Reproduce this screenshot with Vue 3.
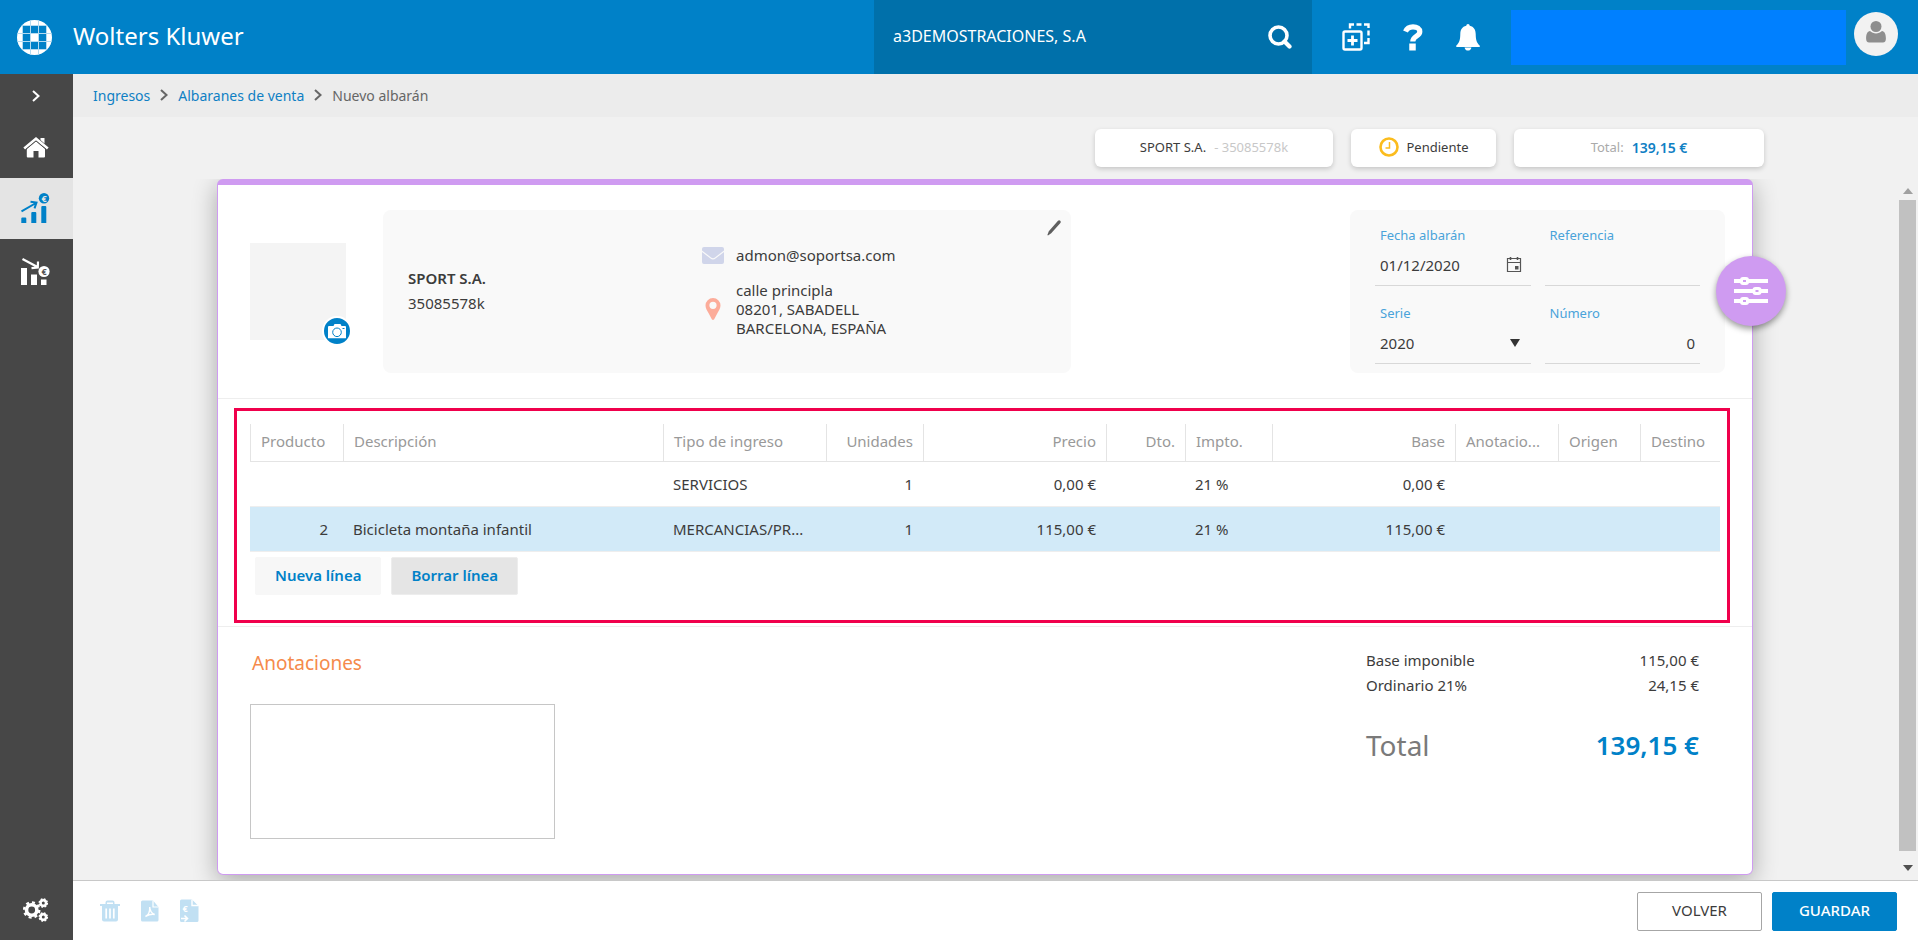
<script setup>
import { ref } from 'vue'

const columns = [
  { key: 'producto', label: 'Producto', width: 93, num: true, labelLeft: true },
  { key: 'descripcion', label: 'Descripción', width: 320 },
  { key: 'tipo', label: 'Tipo de ingreso', width: 163 },
  { key: 'unidades', label: 'Unidades', width: 97, num: true },
  { key: 'precio', label: 'Precio', width: 183, num: true },
  { key: 'dto', label: 'Dto.', width: 79, num: true },
  { key: 'impto', label: 'Impto.', width: 87 },
  { key: 'base', label: 'Base', width: 183, num: true },
  { key: 'anotaciones', label: 'Anotacio...', width: 103 },
  { key: 'origen', label: 'Origen', width: 82 },
  { key: 'destino', label: 'Destino', width: 80 },
]
const tableWidth = columns.reduce((sum, c) => sum + c.width, 0)

const rows = [
  { tipo: 'SERVICIOS', unidades: '1', precio: '0,00 €', impto: '21 %', base: '0,00 €' },
  {
    producto: '2',
    descripcion: 'Bicicleta montaña infantil',
    tipo: 'MERCANCIAS/PR...',
    unidades: '1',
    precio: '115,00 €',
    impto: '21 %',
    base: '115,00 €',
  },
]
const selected = ref(1)
const fecha = ref('01/12/2020')
const referencia = ref('')
const serie = ref('2020')
const numero = ref('0')
const notas = ref('')
</script>

<template>
  <div class="shell">
    <header class="topbar">
      <svg class="logo" viewBox="0 0 35 35" width="35" height="35" aria-hidden="true">
        <defs>
          <clipPath id="globe"><circle cx="17.5" cy="17.5" r="17.5" /></clipPath>
        </defs>
        <g clip-path="url(#globe)">
          <rect width="35" height="35" fill="#fff" />
          <path d="M6 6h7v7H6zM14 6h7v7h-7zM22 6h7v7h-7zM6 14h7v7H6zM22 14h7v7h-7zM6 22h7v7H6zM14 22h7v7h-7zM22 22h7v7h-7z" fill="#0081c8" />
          <path d="M0 5.500h35M0 13.500h35M0 21.500h35M0 29.500h35M5.500 0v35M13.500 0v35M21.500 0v35M29.500 0v35" stroke="#b5dbf0" stroke-width="1" />
        </g>
      </svg>
      <span class="brand">Wolters Kluwer</span>
      <div class="company">
        <span>a3DEMOSTRACIONES, S.A</span>
        <button type="button" class="plain" aria-label="Buscar">
          <svg viewBox="0 0 24 24" width="24" height="24" fill="none" stroke="#fff">
            <circle cx="10.500" cy="10.500" r="8.500" stroke-width="3.600" />
            <path d="M16.500 16.500l5 5" stroke-width="4.200" stroke-linecap="round" />
          </svg>
        </button>
      </div>
      <nav class="tools">
        <button type="button" class="plain" aria-label="Duplicar">
          <svg viewBox="0 0 28 28" width="28" height="28" fill="none" stroke="#fff" stroke-width="2.400">
            <rect x="1.500" y="8.500" width="18" height="18" rx="1.500" />
            <path d="M10.500 12.500v10M5.500 17.500h10" stroke-width="2.800" />
            <path d="M8 5.500V1.500h4M14.500 1.500h5M22 1.500h4.500v3.500M26.500 7.500v5M26.500 15v5h-4.500" />
          </svg>
        </button>
        <button type="button" class="plain" aria-label="Ayuda">
          <svg viewBox="0 0 20 27" width="20" height="27" fill="none" stroke="#fff">
            <path d="M2.500 7.500C4 4 6.500 2.800 10 2.800c4 0 6.800 1.900 6.800 5 0 4.800-7 4-7 9.700" stroke-width="5.200" />
            <path d="M9.500 19.500v7" stroke-width="6.500" />
          </svg>
        </button>
        <button type="button" class="plain" aria-label="Notificaciones">
          <svg viewBox="0 0 24 27" width="24" height="27" fill="#fff">
            <path d="M12 0c1 0 1.600.7 1.700 1.800C18 2.600 19.600 6 19.700 10c.1 6 1 8.500 3.900 11.500.8.900.2 1.500-.7 1.500H1.100c-.9 0-1.500-.6-.7-1.500C3.300 18.500 4.200 16 4.300 10 4.400 6 6 2.600 10.300 1.800 10.400.7 11 0 12 0zM8.600 23.500h6.800c-.2 2-1.600 3.100-3.400 3.100s-3.200-1.100-3.400-3.100z" />
          </svg>
        </button>
      </nav>
      <div class="account"></div>
      <button type="button" class="avatar" aria-label="Usuario">
        <svg viewBox="0 0 20 22" width="20" height="22" fill="#8e8e8e">
          <circle cx="10" cy="5.500" r="5.500" />
          <path d="M4 10c1.700 1.700 3.700 2.400 6 2.400s4.300-.7 6-2.400c2.600.4 3.900 3 3.900 7.500 0 2.800-1 4-3 4H3.100c-2 0-3-1.200-3-4C.1 13 1.400 10.400 4 10z" />
        </svg>
      </button>
    </header>

    <div class="body">
      <nav class="sidebar">
        <button type="button" class="side expand" aria-label="Expandir menú">
          <svg viewBox="0 0 8 12" width="8" height="12" fill="none" stroke="#fff" stroke-width="2"><path d="M1 1l5.500 5L1 11" /></svg>
        </button>
        <button type="button" class="side" aria-label="Inicio">
          <svg viewBox="0 0 26 21" width="26" height="21">
            <path d="M13 4l9 7.800V19.500a1 1 0 0 1-1 1h-5.500V14h-5v6.500H4.800a1 1 0 0 1-1-1v-7.700z" fill="#fff" />
            <path d="M17.500 1h4v5.500l-4-3.500z" fill="#fff" />
            <path d="M1.200 11.500L13 1.700l11.800 9.800" fill="none" stroke="#fff" stroke-width="2.600" />
            <path d="M3 12.300L13 4l10 8.300" fill="none" stroke="#474747" stroke-width=".9" />
          </svg>
        </button>
        <button type="button" class="side active" aria-label="Ingresos">
          <svg viewBox="0 0 29 31" width="29" height="31">
            <path d="M.3 25.500a1 1 0 0 1 1-1h3a1 1 0 0 1 1 1V30h-5zM10.300 20a1 1 0 0 1 1-1h3a1 1 0 0 1 1 1v10h-5zM20.300 14a1 1 0 0 1 1-1h3a1 1 0 0 1 1 1v16h-5z" fill="#0081c8" />
            <path d="M.5 18.300L15 10M9.500 8.800l6 .8-2 5.800" fill="none" stroke="#0081c8" stroke-width="2" />
            <circle cx="23" cy="5.200" r="5.200" fill="#0081c8" />
            <text x="23" y="8.500" text-anchor="middle" class="coin" fill="#e4e4e4">€</text>
          </svg>
        </button>
        <button type="button" class="side" aria-label="Gastos">
          <svg viewBox="0 0 29 28" width="29" height="28">
            <path d="M0 10h6v17H0zM10 16.500h6V27h-6zM20 21.500h5.500V27H20z" fill="#fff" />
            <path d="M1.500 1l15 8M17 3.500l-.2 6-6.300.6" fill="none" stroke="#fff" stroke-width="2.200" />
            <circle cx="23" cy="13.500" r="5.600" fill="#fff" />
            <text x="23" y="17" text-anchor="middle" class="coin" fill="#555">€</text>
          </svg>
        </button>
        <button type="button" class="side settings" aria-label="Configuración">
          <svg viewBox="0 0 26 24" width="26" height="24" fill="none" stroke="#fff">
            <circle cx="8.700" cy="12" r="5.200" stroke-width="3.600" />
            <circle cx="8.700" cy="12" r="7.600" stroke-width="2.400" stroke-dasharray="3 2.970" />
            <circle cx="20.300" cy="5" r="2.700" stroke-width="2.400" />
            <circle cx="20.300" cy="5" r="4" stroke-width="1.600" stroke-dasharray="1.800 1.340" />
            <circle cx="20.300" cy="19" r="2.700" stroke-width="2.400" />
            <circle cx="20.300" cy="19" r="4" stroke-width="1.600" stroke-dasharray="1.800 1.340" />
          </svg>
        </button>
      </nav>

      <main class="main">
        <nav class="crumbs">
          <a href="#ingresos">Ingresos</a>
          <svg viewBox="0 0 8 12" width="8" height="12"><path d="M1 1l5.500 5L1 11" /></svg>
          <a href="#albaranes">Albaranes de venta</a>
          <svg viewBox="0 0 8 12" width="8" height="12"><path d="M1 1l5.500 5L1 11" /></svg>
          <span>Nuevo albarán</span>
        </nav>

        <div class="pills">
          <div class="pill client"><span>SPORT S.A.</span><span class="soft">- 35085578k</span></div>
          <div class="pill state">
            <svg viewBox="0 0 20 20" width="20" height="20" fill="none" stroke="#fbbc1d">
              <circle cx="10" cy="10" r="8.500" stroke-width="2.600" />
              <path d="M10.500 5v6H6.500" stroke-width="1.500" />
            </svg>
            <span>Pendiente</span>
          </div>
          <div class="pill amount"><span class="muted">Total:</span><strong>139,15 €</strong></div>
        </div>

        <div class="viewport">
          <article class="card">
            <section class="head">
              <div class="photo">
                <button type="button" class="camera" aria-label="Cambiar imagen">
                  <svg viewBox="0 0 18 15" width="18" height="15">
                    <path d="M1 2h4.500l1-2h6l1 2H17a1 1 0 0 1 1 1v10.500a.8.800 0 0 1-1 .8H1a.8.800 0 0 1-1-.8V3a1 1 0 0 1 1-1z" fill="#fff" />
                    <circle cx="9" cy="8.300" r="4.300" fill="none" stroke="#0081c8" stroke-width="1" />
                    <path d="M14.500 4.500h2" stroke="#0081c8" />
                  </svg>
                </button>
              </div>

              <div class="panel customer">
                <div class="who"><strong>SPORT S.A.</strong><span>35085578k</span></div>
                <div class="contact">
                  <svg viewBox="0 0 22 17" width="22" height="17" fill="#d0d5ea">
                    <path d="M2 0h18a2 2 0 0 1 2 2v1.500L13 10.400q-2 1.500-4 0L0 3.500V2a2 2 0 0 1 2-2z" />
                    <path d="M0 5l8.500 6.600q2.500 1.700 5 0L22 5v10a2 2 0 0 1-2 2H2a2 2 0 0 1-2-2z" />
                  </svg>
                  <span>admon@soportsa.com</span>
                  <svg viewBox="0 0 16 22" width="16" height="22" fill="#fcac9a">
                    <path fill-rule="evenodd" d="M8 0a7.500 7.500 0 0 1 7.500 7.500c0 3-1.700 5-3 7.500l-3.300 6.200q-1.200 1.500-2.400 0L3.500 15C2.200 12.500.5 10.500.5 7.500A7.500 7.500 0 0 1 8 0zm0 3.700a3.600 3.600 0 1 0 0 7.200 3.600 3.600 0 0 0 0-7.200z" />
                  </svg>
                  <address>calle principla<br />08201, SABADELL<br />BARCELONA, ESPAÑA</address>
                </div>
                <button type="button" class="plain edit" aria-label="Editar">
                  <svg viewBox="0 0 14 16" width="14" height="16" fill="#5f5f5f">
                    <path d="M11 .8q1.200-1 2.200 0 1 .9.200 2.200L4.200 13.300 1 15.500l-.6-.5 1.400-3.800z" />
                  </svg>
                </button>
              </div>

              <form class="panel fields" @submit.prevent>
                <div class="field">
                  <label for="fecha">Fecha albarán</label>
                  <div class="control">
                    <input id="fecha" v-model="fecha" type="text" />
                    <svg viewBox="0 0 16 17" width="16" height="17" fill="none" stroke="#555">
                      <path d="M1.500 2.500h13v13h-13zM1.500 6.500h13" stroke-width="1.200" />
                      <path d="M4.500 1v3M11.500 1v3" stroke-width="1.600" />
                      <path d="M9 10h3.500v3.500H9z" fill="#555" stroke="none" />
                    </svg>
                  </div>
                </div>
                <div class="field">
                  <label for="referencia">Referencia</label>
                  <div class="control"><input id="referencia" v-model="referencia" type="text" /></div>
                </div>
                <div class="field">
                  <label for="serie">Serie</label>
                  <div class="control">
                    <select id="serie" v-model="serie"><option>2020</option></select>
                    <svg viewBox="0 0 14 8" width="14" height="8" fill="#333"><path d="M2 0h10L7 8z" /></svg>
                  </div>
                </div>
                <div class="field">
                  <label for="numero">Número</label>
                  <div class="control number"><input id="numero" v-model="numero" type="text" /></div>
                </div>
              </form>
            </section>

            <section class="lines">
              <div class="frame">
                <table>
                  <colgroup>
                    <col v-for="c in columns" :key="c.key" :style="{ width: (c.width / tableWidth) * 100 + '%' }" />
                  </colgroup>
                  <thead>
                    <tr>
                      <th v-for="c in columns" :key="c.key" :class="{ num: c.num && !c.labelLeft }">{{ c.label }}</th>
                    </tr>
                  </thead>
                  <tbody>
                    <tr v-for="(r, i) in rows" :key="i" :class="{ selected: i === selected }" @click="selected = i">
                      <td v-for="c in columns" :key="c.key" :class="{ num: c.num }">{{ r[c.key] }}</td>
                    </tr>
                  </tbody>
                </table>
                <div class="actions">
                  <button type="button" class="line-btn">Nueva línea</button>
                  <button type="button" class="line-btn pressed">Borrar línea</button>
                </div>
              </div>
            </section>

            <section class="bottom">
              <div class="notes">
                <label for="notas">Anotaciones</label>
                <textarea id="notas" v-model="notas"></textarea>
              </div>
              <dl class="totals">
                <div><dt>Base imponible</dt><dd>115,00 €</dd></div>
                <div><dt>Ordinario 21%</dt><dd>24,15 €</dd></div>
                <div class="grand"><dt>Total</dt><dd>139,15 €</dd></div>
              </dl>
            </section>

            <button type="button" class="fab" aria-label="Opciones">
              <svg viewBox="0 0 34 28" width="34" height="28" stroke="#fff" fill="#cf9bf1">
                <path d="M0 4h34M0 14h34M0 24h34" stroke-width="4" />
                <rect x="7.500" y="1.500" width="6" height="5" rx="1.500" stroke-width="3" />
                <rect x="20" y="11.500" width="6" height="5" rx="1.500" stroke-width="3" />
                <rect x="7.500" y="21.500" width="6" height="5" rx="1.500" stroke-width="3" />
              </svg>
            </button>
          </article>

          <div class="scrollbar" aria-hidden="true">
            <svg viewBox="0 0 10 6" width="10" height="6" fill="#a0a0a0"><path d="M5 0l5 6H0z" /></svg>
            <span class="thumb"></span>
            <svg viewBox="0 0 10 6" width="10" height="6" fill="#505050"><path d="M0 0h10L5 6z" /></svg>
          </div>
        </div>

        <footer class="footer">
          <button type="button" class="plain" aria-label="Eliminar">
            <svg viewBox="0 0 20 22" width="20" height="22" fill="#c1e0f3">
              <path d="M0 4h5.500V2.500q0-2 2-2h5q2 0 2 2V4H20v2H0zM7 4h6V2.500H7z" fill-rule="evenodd" />
              <path d="M2 6h16v13.500a2 2 0 0 1-2 2H4a2 2 0 0 1-2-2z" />
              <path d="M6.200 8.500v10M10 8.500v10M13.800 8.500v10" stroke="#fff" stroke-width="1.700" />
            </svg>
          </button>
          <button type="button" class="plain" aria-label="Exportar PDF">
            <svg viewBox="0 0 18 22" width="18" height="22">
              <path d="M1.500.5H12L17.500 7v13a1.500 1.500 0 0 1-1.500 1.500H1.500A1.500 1.500 0 0 1 0 20V2A1.500 1.500 0 0 1 1.500.5z" fill="#c1e0f3" />
              <path d="M12 .5V7h5.500" fill="none" stroke="#fff" stroke-width="1.200" />
              <path d="M4.500 16.500c3-1.500 4.500-5 4.200-9.500.3 4.500 2 6.500 5 7.500-3-.6-6 .2-9.200 2z" fill="none" stroke="#fff" stroke-width="1.400" />
            </svg>
          </button>
          <button type="button" class="plain" aria-label="Generar factura">
            <svg viewBox="0 0 19 24" width="19" height="24">
              <path d="M1.500.5H12L18.500 7v14.500a1.500 1.500 0 0 1-1.500 1.500H1.500A1.500 1.500 0 0 1 0 21.500V2A1.500 1.500 0 0 1 1.500.5z" fill="#c1e0f3" />
              <path d="M12 .5V6.500h6.500" fill="none" stroke="#fff" stroke-width="1.400" />
              <text x="5" y="12.500" text-anchor="middle" class="coin" fill="#fff">€</text>
              <path d="M1 19.500h6M4.500 16.500l3 3-3 3" fill="none" stroke="#fff" stroke-width="1.600" />
            </svg>
          </button>
          <span class="spacer"></span>
          <div class="decide">
            <button type="button" class="btn">VOLVER</button>
            <button type="button" class="btn primary">GUARDAR</button>
          </div>
        </footer>
      </main>
    </div>
  </div>
</template>

<style>
html,
body {
  margin: 0;
  background: #f1f1f1;
}
</style>

<style scoped>
* {
  box-sizing: border-box;
}
.shell {
  min-height: 100vh;
  display: flex;
  flex-direction: column;
  font-family: 'Noto Sans', 'Open Sans', sans-serif;
  font-size: 15px;
  color: #3c3c3c;
}
button,
input,
select,
textarea {
  font: inherit;
  color: inherit;
}
button {
  cursor: pointer;
}
svg {
  display: block;
  flex: none;
}
.plain {
  border: 0;
  padding: 0;
  background: none;
}
.coin {
  font-size: 9px;
  font-weight: 700;
}

/* top bar */
.topbar {
  height: 74px;
  display: flex;
  align-items: center;
  background: #0081c8;
  color: #fff;
}
.logo {
  margin: 0 21px 0 17px;
}
.brand {
  flex: 1;
  padding-bottom: 3px;
  font-size: 24px;
  white-space: nowrap;
}
.company {
  width: 438px;
  height: 100%;
  padding: 0 19px;
  display: flex;
  align-items: center;
  justify-content: space-between;
  background: #0070aa;
  font-size: 16px;
}
.company span {
  padding-bottom: 3px;
}
.company .plain {
  margin-right: 1px;
}
.tools {
  display: flex;
  align-items: center;
  gap: 33px;
  margin: 0 31px 0 30px;
}
.account {
  width: 335px;
  height: 55px;
  background: #0080ff;
}
.avatar {
  width: 44px;
  height: 44px;
  margin: 0 20px 6px 8px;
  padding: 0 0 4px;
  border: 0;
  border-radius: 50%;
  background: #f2f2f2;
  display: grid;
  place-items: center;
}

/* sidebar */
.body {
  flex: 1;
  display: flex;
}
.sidebar {
  width: 73px;
  background: #474747;
  display: flex;
  flex-direction: column;
}
.side {
  height: 61px;
  border: 0;
  padding: 0 2px 0 0;
  background: none;
  display: grid;
  place-items: center;
}
.expand {
  height: 43px;
}
.active {
  background: #e4e4e4;
}
.side:nth-child(4) {
  height: 65px;
}
.settings {
  margin-top: auto;
}

/* breadcrumb and summary */
.main {
  flex: 1;
  min-width: 0;
  display: flex;
  flex-direction: column;
}
.crumbs {
  height: 43px;
  padding: 0 0 1px 20px;
  display: flex;
  align-items: center;
  gap: 10px;
  background: #ececec;
  color: #666;
  font-size: 14px;
}
.crumbs a {
  color: #0f80c4;
  text-decoration: none;
}
.crumbs svg {
  fill: none;
  stroke: #666;
  stroke-width: 2;
}
.pills {
  display: flex;
  justify-content: flex-end;
  gap: 18px;
  padding: 12px 154px 12px 0;
}
.pill {
  height: 38px;
  display: flex;
  align-items: center;
  justify-content: center;
  gap: 8px;
  padding-bottom: 2px;
  border-radius: 6px;
  background: #fff;
  box-shadow: 0 2px 5px rgba(0, 0, 0, 0.18);
  font-size: 13px;
}
.client {
  width: 238px;
}
.state {
  width: 145px;
}
.amount {
  width: 250px;
}
.soft {
  color: #c8c8c8;
}
.muted {
  color: #aaa;
}
.pill strong {
  color: #0f80c4;
  font-size: 14px;
  font-weight: 600;
}

/* document card */
.viewport {
  flex: 1;
  display: flex;
  overflow: hidden;
}
.card {
  position: relative;
  flex: 1;
  min-width: 0;
  margin: 0 146px 5px 144px;
  border: 1px solid #cf9bf1;
  border-top-width: 6px;
  border-radius: 6px;
  background: #fff;
  box-shadow: 0 6px 24px rgba(0, 0, 0, 0.3);
}
.head {
  display: flex;
  align-items: center;
  padding: 25px 27px 25px 32px;
}
.photo {
  position: relative;
  width: 96px;
  height: 97px;
  margin-right: 37px;
  background: #f4f4f4;
}
.camera {
  position: absolute;
  right: -6px;
  bottom: -6px;
  width: 30px;
  height: 30px;
  padding: 0;
  border: 2px solid #fff;
  border-radius: 50%;
  background: #0081c8;
  display: grid;
  place-items: center;
}
.panel {
  height: 163px;
  border-radius: 8px;
  background: #f9f9f9;
}
.customer {
  position: relative;
  width: 688px;
  display: flex;
  align-items: center;
  padding-left: 25px;
}
.who {
  width: 293px;
  display: flex;
  flex-direction: column;
  padding-bottom: 2px;
  line-height: 25px;
}
.who strong {
  font-weight: 600;
}
.contact {
  display: grid;
  grid-template-columns: 24px auto;
  align-items: center;
  justify-items: center;
  gap: 16px 11px;
  line-height: 19px;
}
.contact span,
.contact address {
  justify-self: start;
  font-style: normal;
}
.edit {
  position: absolute;
  top: 10px;
  right: 10px;
}
.fields {
  margin-left: auto;
  width: 375px;
  padding: 16px 25px 9px;
  display: grid;
  grid-template-columns: 1fr 1fr;
  gap: 18px 14px;
}
.field label {
  display: block;
  padding-left: 5px;
  line-height: 18px;
  font-size: 13px;
  color: #4aa3da;
}
.control {
  display: flex;
  align-items: center;
  height: 42px;
  padding: 0 9px 0 5px;
  border-bottom: 1px solid #d8d8d8;
}
.control input,
.control select {
  flex: 1;
  width: 0;
  min-width: 0;
  padding: 0;
  border: 0;
  outline: 0;
  background: none;
  appearance: none;
}
.number {
  padding-right: 5px;
}
.number input {
  text-align: right;
}

/* line items */
.lines {
  padding: 9px 22px 3px 16px;
  border: solid #eee;
  border-width: 1px 0;
}
.frame {
  height: 215px;
  padding: 13px 7px 0 13px;
  border: 3px solid #f0004c;
}
table {
  width: 100%;
  table-layout: fixed;
  border-collapse: separate;
  border-spacing: 0;
}
th,
td {
  padding: 0 10px;
  text-align: left;
  font-weight: 400;
  white-space: nowrap;
  overflow: hidden;
}
th {
  height: 38px;
  padding-bottom: 4px;
  border-left: 1px solid #e4e4e4;
  border-bottom: 1px solid #e4e4e4;
  color: #999;
}
td {
  height: 45px;
  border-bottom: 1px solid #eee;
}
th.num,
td.num {
  text-align: right;
}
td.num:first-child {
  padding-right: 15px;
}
.selected td {
  background: #d2eaf8;
}
.actions {
  display: flex;
  gap: 10px;
  padding: 5px;
}
.line-btn {
  height: 38px;
  padding: 0 19px 2px;
  border: 1px solid #f7f7f7;
  border-radius: 2px;
  background: #f7f7f7;
  color: #0081c8;
  font-weight: 600;
}
.pressed {
  border-color: #ededed;
  background: #e5e5e5;
}

/* notes and totals */
.bottom {
  display: flex;
  justify-content: space-between;
  padding: 21px 53px 34px 32px;
}
.notes label {
  display: block;
  padding-left: 2px;
  margin-bottom: 26px;
  line-height: 30px;
  font-size: 19px;
  color: #f58a4b;
}
.notes textarea {
  display: block;
  width: 305px;
  height: 135px;
  border: 1px solid #c6c6c6;
  resize: none;
}
.totals {
  width: 333px;
  margin: 0;
}
.totals div {
  display: flex;
  justify-content: space-between;
  line-height: 25px;
}
.totals dd {
  margin: 0;
}
.totals .grand {
  margin-top: 25px;
  line-height: 44px;
  font-size: 28px;
}
.grand dt {
  color: #7a7a7a;
}
.grand dd {
  color: #0081c8;
  font-size: 26px;
  font-weight: 600;
}
.fab {
  position: absolute;
  top: 71px;
  right: -34px;
  width: 70px;
  height: 70px;
  padding: 0;
  border: 0;
  border-radius: 50%;
  background: #cf9bf1;
  box-shadow: 0 3px 6px rgba(0, 0, 0, 0.4);
  display: grid;
  place-items: center;
}

.scrollbar {
  width: 17px;
  margin-right: 2px;
  padding: 9px 0;
  display: flex;
  flex-direction: column;
  align-items: center;
  gap: 6px;
}
.thumb {
  width: 100%;
  flex: 1;
  margin-bottom: 8px;
  background: #c1c1c1;
}

/* footer */
.footer {
  height: 60px;
  display: flex;
  align-items: center;
  gap: 21px;
  padding: 1px 21px 0 27px;
  border-top: 1px solid #c8c8c8;
  background: #fff;
}
.spacer {
  flex: 1;
}
.decide {
  display: flex;
  gap: 10px;
}
.btn {
  width: 125px;
  height: 39px;
  padding-bottom: 3px;
  border: 1px solid #a6a6a6;
  border-radius: 2px;
  background: #fff;
}
.btn.primary {
  border-color: #0081c8;
  background: #0081c8;
  color: #fff;
  font-weight: 500;
}
</style>
